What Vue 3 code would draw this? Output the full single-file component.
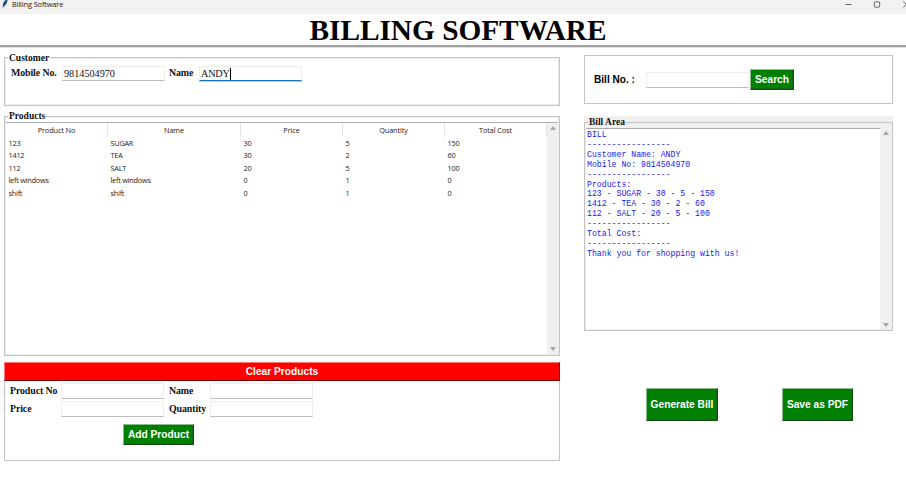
<script setup>
import { ref } from 'vue'

const mobile = ref('9814504970')
const customer = ref('ANDY')
const columns = ['Product No', 'Name', 'Price', 'Quantity', 'Total Cost']
const products = [
  ['123', 'SUGAR', '30', '5', '150'],
  ['1412', 'TEA', '30', '2', '60'],
  ['112', 'SALT', '20', '5', '100'],
  ['left windows', 'left windows', '0', '1', '0'],
  ['shift', 'shift', '0', '1', '0'],
]
const rule = '-----------------'
const bill = [
  'BILL',
  rule,
  'Customer Name: ANDY',
  'Mobile No: 9814504970',
  rule,
  'Products:',
  '123 - SUGAR - 30 - 5 - 150',
  '1412 - TEA - 30 - 2 - 60',
  '112 - SALT - 20 - 5 - 100',
  rule,
  'Total Cost:',
  rule,
  'Thank you for shopping with us!',
].join('\n')
</script>

<template>
  <div class="window">
    <header class="titlebar">
      <svg class="feather" viewBox="0 0 8 10">
        <path d="M6.6 0.2C4 0.6 2 3 1.9 6.2L1.5 9.6L2.6 7.4C5.2 6.4 6.6 3.4 6.6 0.2Z" fill="#2f5f93" />
        <path d="M5.6 1.6C4.2 3 3 5 2.3 7.4" fill="none" stroke="#15304f" stroke-width="0.8" />
      </svg>
      <span class="caption">Billing Software</span>
      <svg class="controls" viewBox="0 0 62 10">
        <path d="M1.5 4.5H7.5" />
        <rect x="30.3" y="1.8" width="5.4" height="5.4" rx="1.2" />
        <path d="M59.2 1.5L65.2 7.5M65.2 1.5L59.2 7.5" />
      </svg>
    </header>

    <h1 class="heading">BILLING SOFTWARE</h1>

    <main class="content">
      <section class="left">
        <div class="frame customer">
          <span class="legend">Customer</span>
          <label class="lbl mobile-lbl">Mobile No.</label>
          <div class="entry">{{ mobile }}</div>
          <label class="lbl name-lbl">Name</label>
          <div class="entry focused">{{ customer }}<i class="caret"></i></div>
        </div>

        <div class="frame products">
          <span class="legend">Products</span>
          <div class="tree">
            <div class="table">
              <div class="row head">
                <span v-for="c in columns" :key="c">{{ c }}</span>
              </div>
              <div v-for="p in products" :key="p[0]" class="row">
                <span v-for="(v, i) in p" :key="i">{{ v }}</span>
              </div>
            </div>
            <div class="scroll"><i class="up"></i><i class="down"></i></div>
          </div>
        </div>

        <button class="btn clear">Clear Products</button>
        <div class="form">
          <div class="fields">
            <label class="lbl">Product No</label><div class="entry"></div>
            <label class="lbl">Name</label><div class="entry"></div>
            <label class="lbl">Price</label><div class="entry"></div>
            <label class="lbl">Quantity</label><div class="entry"></div>
          </div>
          <button class="btn add">Add Product</button>
        </div>
      </section>

      <section class="right">
        <div class="search">
          <label class="bill-lbl">Bill No. :</label>
          <div class="entry"></div>
          <button class="btn find">Search</button>
        </div>

        <div class="bill">
          <div class="frame bill-frame">
            <span class="legend">Bill Area</span>
            <div class="bill-body">
              <pre class="bill-text">{{ bill }}</pre>
              <div class="scroll"><i class="up"></i><i class="down"></i></div>
            </div>
          </div>
        </div>

        <div class="actions">
          <button class="btn generate">Generate Bill</button>
          <button class="btn save">Save as PDF</button>
        </div>
      </section>
    </main>
  </div>
</template>

<style>
body {
  margin: 0;
  background: #fff;
}
</style>

<style scoped>
.window,
.window * {
  box-sizing: border-box;
}
.window {
  width: 906px;
  height: 485px;
  overflow: hidden;
  background: #fff;
}
.titlebar {
  display: flex;
  height: 14px;
  background: #f2f2f2;
  overflow: hidden;
}
.feather {
  width: 8px;
  height: 10px;
  margin: -1px 3px 0 1px;
}
.caption {
  font: 7.4px/9px "Open Sans", sans-serif;
  letter-spacing: -0.13px;
  color: #222;
}
.controls {
  width: 62px;
  height: 10px;
  margin-left: auto;
  fill: none;
  stroke: #555;
  stroke-width: 0.9;
}
.heading {
  height: 33px;
  margin: 0;
  padding-left: 10px;
  border-bottom: 2px solid #a0a0a0;
  box-shadow: 0 1px 0 #e0e0e0;
  font: bold 29.3px/32px "Liberation Serif", serif;
  text-align: center;
  color: #000;
}
.content {
  display: flex;
  gap: 24px;
  padding: 8px 0 0 4px;
}
.left {
  width: 556px;
  padding-top: 2px;
}
.right {
  width: 309px;
}
.frame {
  position: relative;
  border: 1px solid #c4c4c4;
  outline: 1px solid #eee;
  outline-offset: -2px;
}
.legend {
  position: absolute;
  top: -6px;
  left: 3px;
  padding: 0 1px;
  background: #fff;
  font: bold 9.5px/11px "Liberation Serif", serif;
  color: #111;
  white-space: nowrap;
}
.customer .legend {
  top: -5px;
}
.lbl {
  font: bold 9.9px/14px "Liberation Serif", serif;
  letter-spacing: -0.1px;
  color: #111;
  white-space: nowrap;
}
.entry {
  width: 103px;
  height: 16px;
  padding-left: 1px;
  border: 1px solid #eee;
  border-bottom-color: #bdbdbd;
  background: #fff;
  font: 10.2px/13px "Liberation Serif", serif;
  color: #111;
  display: flex;
}
.entry.focused {
  border-bottom: 1px solid #1874b8;
  box-shadow: 0 0.5px 0 #5a9fd0;
  letter-spacing: -0.2px;
}
.caret {
  width: 1px;
  height: 12px;
  margin-top: 1px;
  background: #000;
}
.customer {
  display: flex;
  align-items: flex-start;
  height: 49px;
  padding: 8px 0 0 6px;
}
.customer .entry {
  height: 15px;
}
.mobile-lbl {
  width: 51px;
}
.name-lbl {
  width: 30px;
  margin-left: 4px;
}
.products {
  height: 240px;
  margin-top: 10px;
  padding-top: 5px;
}
.tree {
  display: flex;
  height: 233px;
  border: 1px solid #a9abb2;
  border-right: 0;
}
.table {
  flex: 1;
}
.row {
  display: grid;
  grid-template-columns: 102px 133px 102px 102px 1fr;
  height: 12.4px;
  font: 7.3px/12.6px "Open Sans", sans-serif;
  letter-spacing: -0.22px;
  color: #222;
}
.row span {
  padding-left: 2.5px;
  white-space: nowrap;
}
.row.head {
  height: 14px;
  line-height: 14px;
  text-align: center;
  letter-spacing: -0.1px;
}
.row.head span {
  padding: 0;
  border-right: 1px solid #e2e2e2;
}
.scroll {
  display: flex;
  flex-direction: column;
  justify-content: space-between;
  align-items: center;
  width: 12px;
  padding: 3px 0;
  background: #f0f0f0;
}
.scroll i {
  border: 3px solid transparent;
}
.up {
  border-top: 0 !important;
  border-bottom: 4px solid #a5a5a5 !important;
}
.down {
  border-bottom: 0 !important;
  border-top: 4px solid #a5a5a5 !important;
}
.btn {
  display: block;
  padding: 0;
  border: 1px solid;
  border-color: #8cba8c #174f17 #174f17 #8cba8c;
  background: #008000;
  box-shadow: inset -1px -1px 0 #126512;
  color: #fff;
  font: bold 10.2px/12px "Liberation Sans", sans-serif;
  white-space: nowrap;
}
.clear {
  width: 556px;
  height: 19px;
  margin-top: 6px;
  border-color: #f77 #700 #700 #f77;
  background: #f00;
  box-shadow: none;
}
.form {
  height: 80px;
  border: 1px solid #c4c4c4;
  border-top: 0;
  padding: 2px 0 0 5px;
}
.fields {
  display: grid;
  grid-template-columns: 51px 108px 41px 103px;
  row-gap: 2px;
}
.fields .lbl {
  padding-top: 1px;
}
.add {
  width: 71px;
  height: 21px;
  margin: 7px 0 0 113px;
}
.search {
  display: flex;
  align-items: center;
  height: 49px;
  padding-left: 9px;
  border: 1px solid #c4c4c4;
}
.bill-lbl {
  width: 52px;
  font: bold 10.1px/12px "Liberation Sans", sans-serif;
  color: #000;
}
.find {
  width: 44px;
  height: 21px;
  margin-left: 1px;
}
.bill {
  height: 215px;
  margin-top: 12px;
  padding-top: 6px;
  background: #f0f0f0;
}
.bill-frame {
  height: 209px;
  padding-top: 5px;
}
.bill .legend {
  background: #f0f0f0;
}
.bill-body {
  display: flex;
  height: 202px;
}
.bill-text {
  flex: 1;
  margin: 0;
  padding: 1px 0 0 1px;
  border-top: 1px solid #a8a8a8;
  border-left: 1px solid #a8a8a8;
  background: #fff;
  font: 8.2px/9.9px "Liberation Mono", monospace;
  color: #1a1af0;
}
.actions {
  display: flex;
  gap: 64px;
  padding: 57px 0 0 62px;
}
.generate {
  width: 72px;
  height: 33px;
}
.save {
  width: 71px;
  height: 33px;
}
</style>
